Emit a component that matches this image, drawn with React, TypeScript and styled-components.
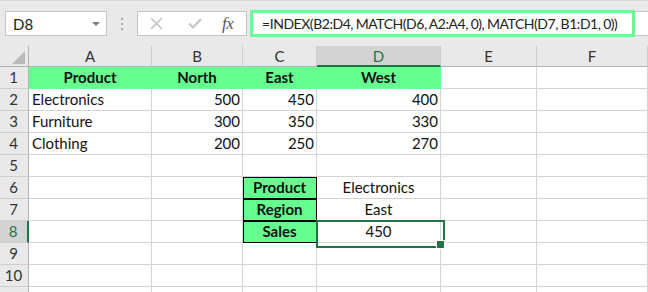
import React from "react";
import styled, { createGlobalStyle, css } from "styled-components";

const GREEN_FILL = "#66ff8f";
const EXCEL_GREEN = "#217346";
const GRID = "#d4d4d4";
const HEAD_BG = "#e9e9e9";

const Global = createGlobalStyle`
  html, body { margin: 0; padding: 0; background: #fff; }
  body { font-family: Lato, "Liberation Sans", sans-serif; overflow: hidden; }
  * { box-sizing: border-box; }
`;

const Window = styled.div`
  width: 648px;
  height: 292px;
  overflow: hidden;
  background: #fff;
`;

const Toolbar = styled.div`
  height: 46px;
  background: ${HEAD_BG};
  border-top: 1px solid #d6d6d6;
  display: flex;
  align-items: flex-start;
  padding-top: 10px;
  padding-left: 5px;
`;

const NameBox = styled.div`
  width: 102px;
  height: 25px;
  background: #fff;
  border: 1px solid #c6c6c6;
  display: flex;
  align-items: center;
  justify-content: space-between;
  padding: 0 6px 0 7px;
  font-size: 15px;
  color: #222;
`;

const DropArrow = styled.span`
  width: 0;
  height: 0;
  border-left: 4px solid transparent;
  border-right: 4px solid transparent;
  border-top: 4px solid #7a7a7a;
`;

const Grip = styled.div`
  width: 30px;
  height: 25px;
  display: flex;
  flex-direction: column;
  align-items: center;
  justify-content: center;
  gap: 3px;
  & > span {
    width: 2px;
    height: 2px;
    background: #a9a9a9;
  }
`;

const FnButtons = styled.div`
  width: 110px;
  height: 25px;
  background: #fff;
  border: 1px solid #c6c6c6;
  display: flex;
  align-items: center;
  padding-left: 12px;
`;

const IconSlot = styled.div<{ $w: number }>`
  width: ${(p) => p.$w}px;
  height: 23px;
  display: flex;
  align-items: center;
`;

const Fx = styled.span`
  font-family: "Liberation Serif", "DejaVu Serif", serif;
  font-style: italic;
  font-size: 17px;
  color: #555;
  letter-spacing: -0.5px;
`;

const FormulaBar = styled.div`
  flex: 1;
  margin-left: 3px;
  height: 25px;
  background: #fff;
  border-top: 1px solid #c6c6c6;
  border-bottom: 1px solid #c6c6c6;
  display: flex;
`;

const FormulaHighlight = styled.div`
  width: 385px;
  height: 27px;
  margin: -2px 0 0 0;
  border: 3px solid #6cfb93;
  background: #fff;
  display: flex;
  align-items: center;
  padding-left: 9px;
  font-size: 14px;
  letter-spacing: -0.45px;
  word-spacing: -0.5px;
  color: #222;
  white-space: nowrap;
  overflow: hidden;
`;

const Sheet = styled.div`
  display: grid;
  grid-template-columns: 29px 123px 91px 74px 124px 96px 1fr;
  grid-template-rows: 21px;
  grid-auto-rows: 22px;
`;

const Corner = styled.div`
  background: ${HEAD_BG};
  border-right: 1px solid #b3b3b3;
  border-bottom: 1px solid #b3b3b3;
  position: relative;
  &::after {
    content: "";
    position: absolute;
    right: 3px;
    bottom: 2px;
    width: 0;
    height: 0;
    border-left: 13px solid transparent;
    border-bottom: 13px solid #b9b9b9;
  }
`;

const ColHead = styled.div<{ $active?: boolean }>`
  background: ${(p) => (p.$active ? "#d3d3d3" : HEAD_BG)};
  border-right: 1px solid #cfcfcf;
  border-bottom: ${(p) => (p.$active ? `2px solid ${EXCEL_GREEN}` : "1px solid #b3b3b3")};
  color: ${(p) => (p.$active ? EXCEL_GREEN : "#333")};
  font-size: 15px;
  line-height: 20px;
  text-align: center;
`;

const RowHead = styled.div<{ $active?: boolean }>`
  background: ${(p) => (p.$active ? "#d3d3d3" : HEAD_BG)};
  border-right: ${(p) => (p.$active ? `2px solid ${EXCEL_GREEN}` : "1px solid #b3b3b3")};
  border-bottom: 1px solid #cfcfcf;
  color: ${(p) => (p.$active ? EXCEL_GREEN : "#333")};
  font-size: 15px;
  line-height: 21px;
  text-align: center;
  padding-right: 1px;
`;

type Align = "left" | "center" | "right";

const Cell = styled.div<{
  $align: Align;
  $bold?: boolean;
  $fill?: boolean;
  $boxed?: boolean;
  $selected?: boolean;
}>`
  position: relative;
  background: ${(p) => (p.$fill ? GREEN_FILL : "#fff")};
  border-right: 1px solid ${GRID};
  border-bottom: 1px solid ${GRID};
  font-size: 15px;
  line-height: 21px;
  color: #111;
  text-align: ${(p) => p.$align};
  font-weight: ${(p) => (p.$bold ? 700 : 400)};
  padding: 0 ${(p) => (p.$align === "right" ? 2 : 3)}px 0 3px;
  white-space: nowrap;
  ${(p) =>
    p.$fill &&
    !p.$boxed &&
    css`
      border-color: ${GREEN_FILL};
    `}
  ${(p) =>
    p.$boxed &&
    css`
      border-right-color: #000;
      border-bottom-color: #000;
      box-shadow: inset 1px 0 0 #000, inset 0 1px 0 #000;
    `}
  ${(p) =>
    p.$selected &&
    css`
      z-index: 2;
      &::before {
        content: "";
        position: absolute;
        left: -1px;
        top: -1px;
        width: 125px;
        height: 24px;
        border: 2px solid ${EXCEL_GREEN};
        pointer-events: none;
      }
      &::after {
        content: "";
        position: absolute;
        left: 119px;
        top: 19px;
        width: 7px;
        height: 7px;
        background: ${EXCEL_GREEN};
        border: 1px solid #fff;
      }
    `}
`;

type CellData = {
  v?: string;
  a?: Align;
  b?: boolean;
  f?: boolean;
  box?: boolean;
  sel?: boolean;
};

const H = (v: string): CellData => ({ v, a: "center", b: true, f: true });
const L = (v: string): CellData => ({ v, a: "left" });
const R = (v: string): CellData => ({ v, a: "right" });
const C = (v: string): CellData => ({ v, a: "center" });
const BOX = (v: string): CellData => ({ v, a: "center", b: true, f: true, box: true });
const E: CellData = {};

const rows: CellData[][] = [
  [H("Product"), H("North"), H("East"), H("West"), E, E],
  [L("Electronics"), R("500"), R("450"), R("400"), E, E],
  [L("Furniture"), R("300"), R("350"), R("330"), E, E],
  [L("Clothing"), R("200"), R("250"), R("270"), E, E],
  [E, E, E, E, E, E],
  [E, E, BOX("Product"), C("Electronics"), E, E],
  [E, E, BOX("Region"), C("East"), E, E],
  [E, E, BOX("Sales"), { ...C("450"), sel: true }, E, E],
  [E, E, E, E, E, E],
  [E, E, E, E, E, E],
];

const filler: CellData[] = [E, E, E, E, E, E];

const columns = ["A", "B", "C", "D", "E", "F"];

export default function App() {
  return (
    <Window>
      <Global />
      <Toolbar>
        <NameBox>
          <span>D8</span>
          <DropArrow />
        </NameBox>
        <Grip>
          <span />
          <span />
          <span />
        </Grip>
        <FnButtons>
          <IconSlot $w={38}>
            <svg width="13" height="13" viewBox="0 0 13 13">
              <path d="M1 1 L12 12 M12 1 L1 12" stroke="#c4c4c4" strokeWidth="1.6" fill="none" />
            </svg>
          </IconSlot>
          <IconSlot $w={34}>
            <svg width="14" height="11" viewBox="0 0 14 11">
              <path d="M1 5.5 L5 9.5 L13 1" stroke="#c4c4c4" strokeWidth="2" fill="none" />
            </svg>
          </IconSlot>
          <IconSlot $w={20}>
            <Fx>fx</Fx>
          </IconSlot>
        </FnButtons>
        <FormulaBar>
          <FormulaHighlight>=INDEX(B2:D4, MATCH(D6, A2:A4, 0), MATCH(D7, B1:D1, 0))</FormulaHighlight>
        </FormulaBar>
      </Toolbar>
      <Sheet>
        <Corner />
        {columns.map((c) => (
          <ColHead key={c} $active={c === "D"}>
            {c}
          </ColHead>
        ))}
        {rows.map((row, ri) => (
          <React.Fragment key={ri}>
            <RowHead $active={ri === 7}>{ri + 1}</RowHead>
            {row.map((cell, ci) => (
              <Cell
                key={ci}
                $align={cell.a ?? "left"}
                $bold={cell.b}
                $fill={cell.f}
                $boxed={cell.box}
                $selected={cell.sel}
              >
                {cell.v}
              </Cell>
            ))}
          </React.Fragment>
        ))}
        <RowHead />
        {filler.map((_, ci) => (
          <Cell key={ci} $align="left" />
        ))}
      </Sheet>
    </Window>
  );
}
